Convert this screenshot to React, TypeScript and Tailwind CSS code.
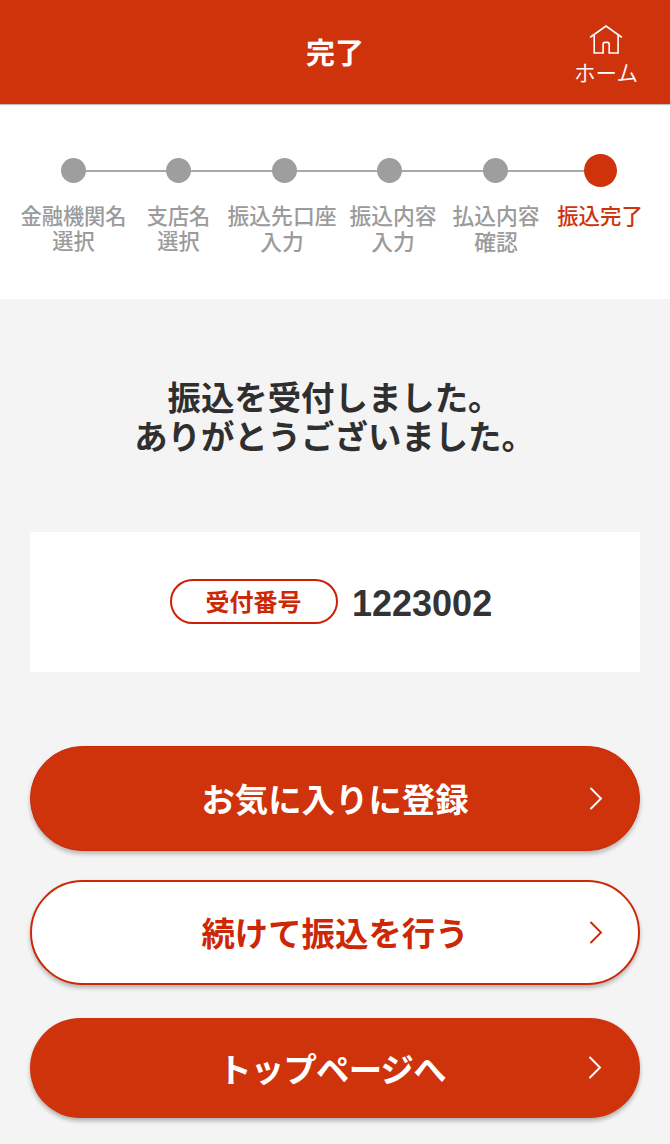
import clsx from 'clsx';

interface Step {
  lines: string[];
  labelClass: string;
}

const steps: Step[] = [
  { lines: ['金融機関名', '選択'], labelClass: 'w-[107px] text-[21.2px] leading-[25px]' },
  { lines: ['支店名', '選択'], labelClass: 'ml-[19px] w-[65px] text-[21.2px] leading-[25px]' },
  { lines: ['振込先口座', '入力'], labelClass: 'ml-[16px] w-[110px] text-[21.8px] leading-[26px]' },
  { lines: ['振込内容', '入力'], labelClass: 'ml-[11px] w-[90px] text-[21.8px] leading-[26px]' },
  { lines: ['払込内容', '確認'], labelClass: 'ml-[13px] w-[90px] text-[21.8px] leading-[26px]' },
  { lines: ['振込完了'], labelClass: 'ml-[14px] w-[90px] text-[21.4px] leading-[26px]' },
];

function HomeIcon() {
  return (
    <svg className="h-[31px] w-[34px]" viewBox="0 0 34 31" fill="none" stroke="currentColor" strokeWidth={1.6}>
      <path strokeLinecap="round" d="M1.6 13 17 2l15.400 11" />
      <path d="M5.200 10.600V29h8.900V20.200a1.800 1.800 0 0 1 1.800-1.800h2.500a1.800 1.800 0 0 1 1.800 1.800V29h8.900V10.600" />
    </svg>
  );
}

function ChevronIcon({ className }: { className?: string }) {
  return (
    <svg
      className={clsx('absolute top-1/2 h-6 w-[14px] -translate-y-1/2', className)}
      viewBox="0 0 14 24"
      fill="none"
      stroke="currentColor"
      strokeWidth={1.9}
    >
      <path strokeLinecap="round" d="M2 1.500l10 10L2 21.500" />
    </svg>
  );
}

function Header() {
  return (
    <header className="relative flex h-[104px] justify-center bg-[#cf330c] text-white shadow-[0_1px_1px_rgba(0,0,0,0.25)]">
      <h1 className="pt-[29px] text-[29px] leading-[44px] font-bold">完了</h1>
      <button type="button" className="absolute top-6 right-[30px] flex w-[68px] flex-col items-center">
        <HomeIcon />
        <span className="mt-[2px] text-[21.5px] leading-[30px] font-[350] whitespace-nowrap">ホーム</span>
      </button>
    </header>
  );
}

function Stepper() {
  return (
    <section className="h-[195px] bg-white pt-[50px]">
      <div className="flex h-[33px] items-center pl-[61px]">
        {steps.map((step, i) => {
          const current = i === steps.length - 1;
          return (
            <div key={i} className="flex items-center">
              {i > 0 && <div className={clsx('h-[2px] bg-[#a9a9a9]', current ? 'w-[76.500px]' : 'w-[80.400px]')} />}
              <div
                className={clsx(
                  'rounded-full',
                  current ? 'size-[33px] bg-[#cf330c]' : 'size-[25px] bg-[#9e9e9e]'
                )}
              />
            </div>
          );
        })}
      </div>
      <div className="mt-[15px] flex pl-5">
        {steps.map((step, i) => (
          <div
            key={i}
            className={clsx(
              'text-center font-medium whitespace-nowrap',
              step.labelClass,
              i === steps.length - 1 ? 'text-[#cf330c]' : 'text-[#9b9b9b]'
            )}
          >
            {step.lines.map((line) => (
              <div key={line}>{line}</div>
            ))}
          </div>
        ))}
      </div>
    </section>
  );
}

export default function App() {
  return (
    <div className="h-[1144px] w-[670px] overflow-hidden bg-[#f4f4f4] font-['Noto_Sans_CJK_JP',sans-serif]">
      <Header />
      <Stepper />

      <main className="px-[30px]">
        <p className="pt-[77px] pr-px text-center text-[33.4px] leading-[39px] font-bold text-[#2f2f2f]">
          振込を受付しました。
          <br />
          ありがとうございました。
        </p>

        {/* Receipt number */}
        <div className="mt-[78px] flex h-[140px] items-center bg-white pl-[140px]">
          <div className="-mt-px flex h-[45px] w-[168px] items-center justify-center rounded-full border-2 border-[#cc1f05] pr-px pb-px text-[24px] leading-none font-bold text-[#cc2805]">
            受付番号
          </div>
          <div className="ml-[14px] pt-1 font-['Liberation_Sans',sans-serif] text-[36px] leading-none font-bold text-[#333]">
            1223002
          </div>
        </div>

        {/* Actions */}
        <button
          type="button"
          className="relative mt-[74px] flex h-[105px] w-full items-center justify-center rounded-full border border-[#cc2805] bg-[#cf330c] pb-[2px] text-[33.4px] leading-none font-bold text-white shadow-[0_3px_4px_rgba(0,0,0,0.25)]"
        >
          お気に入りに登録
          <ChevronIcon className="right-[36px]" />
        </button>
        <button
          type="button"
          className="relative mt-[29px] flex h-[105px] w-full items-center justify-center rounded-full border-2 border-[#cc2805] bg-white pb-[2px] text-[33.4px] leading-none font-bold text-[#cc2805] shadow-[0_3px_4px_rgba(0,0,0,0.25)]"
        >
          続けて振込を行う
          <ChevronIcon className="right-[35px]" />
        </button>
        <button
          type="button"
          className="relative mt-[33px] flex h-[100px] w-full items-center justify-center rounded-full bg-[#cf330c] pr-[6px] text-[33.4px] leading-none font-bold tracking-[-0.8px] text-white shadow-[0_3px_4px_rgba(0,0,0,0.28)]"
        >
          トップページへ
          <ChevronIcon className="right-[38px]" />
        </button>
      </main>
    </div>
  );
}
